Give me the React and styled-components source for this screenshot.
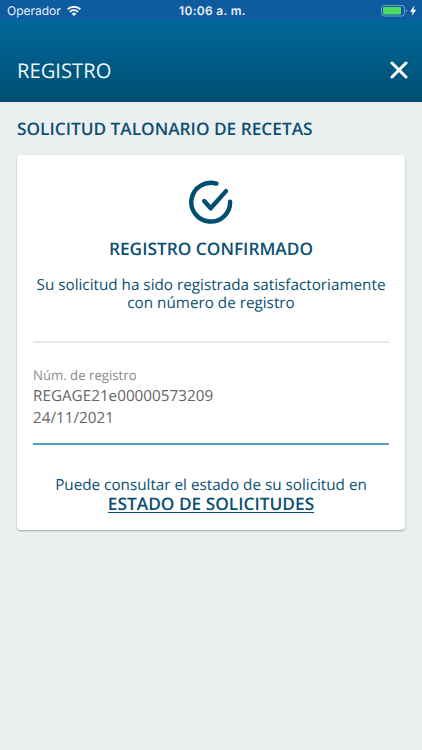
import styled, { createGlobalStyle } from "styled-components";

const GlobalStyle = createGlobalStyle`
  *,
  *::before,
  *::after {
    box-sizing: border-box;
    margin: 0;
    padding: 0;
  }

  body {
    background-color: #ebeff0;
    color: #0b4f73;
    font-family: "Open Sans", "Noto Sans", sans-serif;
    text-rendering: geometricPrecision;
  }
`;

const Screen = styled.div`
  display: flex;
  flex-direction: column;
  min-height: 750px;
`;

const StatusBar = styled.div`
  display: grid;
  grid-template-columns: 1fr auto 1fr;
  align-items: center;
  height: 20px;
  padding: 1px 5px 0 7px;
  background-color: #0e5b9f;
  color: #e6f0f8;
  font-family: Inter, "Liberation Sans", sans-serif;
  font-size: 12px;
`;

const Carrier = styled.div`
  display: flex;
  align-items: center;
  gap: 6px;
`;

const Clock = styled.div`
  padding-left: 1px;
  font-weight: 600;
  letter-spacing: 0.3px;
`;

const Power = styled.div`
  display: flex;
  justify-content: flex-end;
`;

const Header = styled.header`
  display: flex;
  align-items: center;
  justify-content: space-between;
  height: 82px;
  padding: 17px 14px 0 17px;
  background-image: linear-gradient(#00689a, #004e72);
  color: #eef6fa;
`;

const HeaderTitle = styled.h1`
  font-size: 20.2px;
  font-weight: 400;
  line-height: 28px;
`;

const CloseButton = styled.button`
  display: flex;
  border: none;
  background: none;
  color: #fff;
`;

const Main = styled.main`
  padding: 16px 17px;
`;

const Subtitle = styled.h2`
  font-size: 17.25px;
  font-weight: 600;
  line-height: 24px;
`;

const Card = styled.section`
  display: flex;
  flex-direction: column;
  height: 375px;
  margin-top: 13px;
  padding: 24px 16px 0;
  border-radius: 4px;
  background-color: #fff;
  box-shadow: 0 1px 2px rgba(0, 0, 0, 0.32);
  text-align: center;
`;

const CheckIcon = styled.svg`
  display: block;
  align-self: center;
`;

const CardTitle = styled.h3`
  margin-top: 13px;
  font-size: 17.3px;
  font-weight: 600;
  line-height: 24px;
`;

const Text = styled.p`
  margin-top: ${(props) => props.$top}px;
  font-size: 15.25px;
  line-height: 18px;
  white-space: nowrap;
`;

const Divider = styled.hr`
  height: ${(props) => props.$height}px;
  margin-top: ${(props) => props.$top}px;
  border: none;
  background-color: ${(props) => props.$color};
`;

const Record = styled.div`
  margin-top: 23px;
  color: #666;
  font-size: 15.25px;
  line-height: 22px;
  text-align: left;
`;

const Label = styled.div`
  color: #8c8c8c;
  font-size: 13.2px;
  line-height: 19px;
`;

const StatusLink = styled.a`
  align-self: center;
  color: #0b4f73;
  font-size: 17.3px;
  font-weight: 600;
  line-height: 22px;
  text-decoration: underline;
  text-decoration-thickness: 1px;
  text-underline-offset: 2px;
`;

function WifiIcon() {
  return (
    <svg width="14" height="10" viewBox="0 0 14 10" fill="none">
      <path d="M.7 3.3a9.2 9.2 0 0 1 12.6 0" stroke="#fff" strokeWidth="1.9" />
      <path d="M2.9 5.8a6 6 0 0 1 8.2 0" stroke="#fff" strokeWidth="1.8" />
      <path d="M7 10 4.7 7.7a3.3 3.3 0 0 1 4.6 0z" fill="#fff" />
    </svg>
  );
}

function BatteryIcon() {
  return (
    <svg width="36" height="12" viewBox="0 0 36 12">
      <rect
        x="0.5"
        y="0.5"
        width="23"
        height="10.5"
        rx="2.5"
        fill="none"
        stroke="#6f9fca"
      />
      <rect x="2" y="2" width="18" height="7.5" rx="1" fill="#4cd964" />
      <path d="M25 4v3.6c1.6-.5 1.6-3.1 0-3.6z" fill="#6f9fca" />
      <path d="M33.5.5 29 6.7h2.6L30.6 11l4.7-6.2h-2.7z" fill="#fff" />
    </svg>
  );
}

function App() {
  return (
    <>
      <GlobalStyle />
      <Screen>
        <StatusBar>
          <Carrier>
            Operador
            <WifiIcon />
          </Carrier>
          <Clock>10:06 a. m.</Clock>
          <Power>
            <BatteryIcon />
          </Power>
        </StatusBar>
        <Header>
          <HeaderTitle>REGISTRO</HeaderTitle>
          <CloseButton aria-label="Cerrar">
            <svg width="18" height="18" viewBox="0 0 18 18">
              <path
                d="M2 2l14 14M16 2 2 16"
                stroke="currentColor"
                strokeWidth="3"
                strokeLinecap="round"
              />
            </svg>
          </CloseButton>
        </Header>
        <Main>
          <Subtitle>SOLICITUD TALONARIO DE RECETAS</Subtitle>
          <Card>
            <CheckIcon
              width="46"
              height="46"
              viewBox="0 0.5 46 46"
              fill="none"
              stroke="#004e70"
              strokeWidth="4.4"
              strokeLinecap="round"
              strokeLinejoin="round"
            >
              <path d="M28.4 5.1A19.4 19.4 0 1 0 42.1 23.2" />
              <path d="m16.2 22.5 6.5 7.3L38 12.6" />
            </CheckIcon>
            <CardTitle>REGISTRO CONFIRMADO</CardTitle>
            <Text $top={14}>
              Su solicitud ha sido registrada satisfactoriamente
              <br />
              con número de registro
            </Text>
            <Divider $top={29} $height={2} $color="#e9e9e9" />
            <Record>
              <Label>Núm. de registro</Label>
              <div>REGAGE21e00000573209</div>
              <div>24/11/2021</div>
            </Record>
            <Divider $top={14} $height={1.5} $color="#4f9fc8" />
            <Text $top={31.5}>Puede consultar el estado de su solicitud en</Text>
            <StatusLink href="#">ESTADO DE SOLICITUDES</StatusLink>
          </Card>
        </Main>
      </Screen>
    </>
  );
}

export default App;
